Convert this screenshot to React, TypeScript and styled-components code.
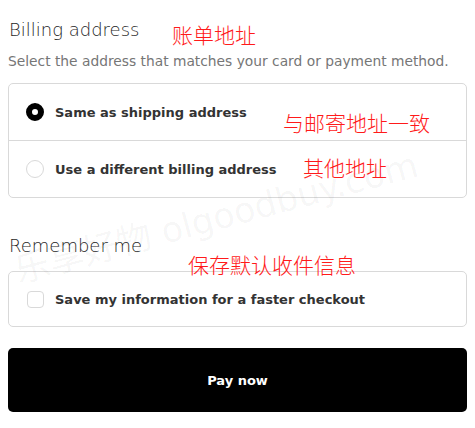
import React from "react";
import styled, { createGlobalStyle } from "styled-components";

const Global = createGlobalStyle`
  html, body { margin: 0; padding: 0; background: #fff; }
  body { font-family: "DejaVu Sans", "Noto Sans", sans-serif; color: #333; }
`;

const Page = styled.div`
  position: relative;
  width: 475px;
  height: 428px;
  padding: 0 8px;
  box-sizing: border-box;
  overflow: hidden;
`;

const Title = styled.h2<{ $top: number }>`
  margin: ${(p) => p.$top}px 0 0 1px;
  font-size: 18px;
  font-weight: 300;
  line-height: 24px;
  color: #1f1f1f;
`;

const Subtitle = styled.p`
  margin: 10px 0 0 0;
  font-size: 13.8px;
  line-height: 18px;
  color: #767676;
  font-weight: 400;
`;

const Card = styled.div<{ $top: number }>`
  margin-top: ${(p) => p.$top}px;
  border: 1px solid #d9d9d9;
  border-radius: 5px;
  display: flex;
  flex-direction: column;
`;

const Row = styled.label<{ $h: number }>`
  display: flex;
  align-items: center;
  gap: 11px;
  height: ${(p) => p.$h}px;
  padding: 0 0 0 17px;
  & + & { border-top: 1px solid #d9d9d9; }
`;

const Radio = styled.span<{ $on?: boolean }>`
  width: 18px;
  height: 18px;
  box-sizing: border-box;
  border-radius: 50%;
  flex: none;
  border: ${(p) => (p.$on ? "6px solid #000" : "1px solid #d9d9d9")};
  background: #fff;
`;

const Check = styled.span`
  width: 17px;
  height: 17px;
  margin-left: 1px;
  box-sizing: border-box;
  border: 1px solid #d9d9d9;
  border-radius: 4px;
  flex: none;
  background: #fff;
`;

const RowText = styled.span`
  font-size: 13px;
  font-weight: 700;
  color: #333;
`;

const PayButton = styled.button`
  display: block;
  width: 100%;
  height: 64px;
  margin-top: 21px;
  background: #000;
  color: #fff;
  border: none;
  border-radius: 5px;
  font-family: inherit;
  font-size: 13px;
  font-weight: 700;
`;

const Note = styled.span<{ $x: number; $y: number }>`
  position: absolute;
  left: ${(p) => p.$x}px;
  top: ${(p) => p.$y}px;
  font-family: "Noto Sans CJK SC", sans-serif;
  font-size: 21px;
  line-height: 22px;
  font-weight: 300;
  color: #ff1a1a;
  white-space: nowrap;
  pointer-events: none;
`;

const Watermark = styled.span`
  position: absolute;
  left: 20px;
  top: 254px;
  line-height: 34px;
  transform: rotate(-15deg);
  transform-origin: 0 100%;
  font-family: "DejaVu Sans", "Noto Sans CJK SC", sans-serif;
  font-size: 35px;
  color: rgba(0, 0, 0, 0.045);
  white-space: nowrap;
  pointer-events: none;
`;

export default function App() {
  return (
    <>
      <Global />
      <Page>
        <Title $top={18}>Billing address</Title>
        <Subtitle>Select the address that matches your card or payment method.</Subtitle>
        <Card $top={13}>
          <Row $h={56}>
            <Radio $on />
            <RowText>Same as shipping address</RowText>
          </Row>
          <Row $h={56}>
            <Radio />
            <RowText>Use a different billing address</RowText>
          </Row>
        </Card>
        <Title $top={36}>Remember me</Title>
        <Card $top={13}>
          <Row $h={54}>
            <Check />
            <RowText>Save my information for a faster checkout</RowText>
          </Row>
        </Card>
        <PayButton>Pay now</PayButton>
        <Watermark>乐享好物 olgoodbuy.com</Watermark>
        <Note $x={172} $y={23}>账单地址</Note>
        <Note $x={283} $y={111}>与邮寄地址一致</Note>
        <Note $x={303} $y={156}>其他地址</Note>
        <Note $x={188} $y={253}>保存默认收件信息</Note>
      </Page>
    </>
  );
}
